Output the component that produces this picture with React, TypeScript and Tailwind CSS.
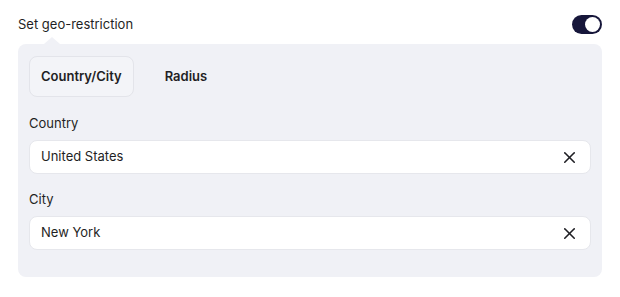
import { X } from "lucide-react";

function Field({ label, value }: { label: string; value: string }) {
  return (
    <div className="flex flex-col">
      <div className="h-[18px] text-[13px] leading-[18px] text-[#1f1f24]">{label}</div>
      <div className="mt-[8px] flex h-[34px] items-center justify-between rounded-lg border border-[#e6e7ec] bg-white pl-[11px] pr-[11px]">
        <span className="text-[13px] text-[#1f1f24]">{value}</span>
        <X className="h-[19px] w-[19px] text-[#1f1f24]" strokeWidth={2} />
      </div>
    </div>
  );
}

export default function App() {
  return (
    <div className="h-[297px] w-[620px] bg-white px-[18px] pt-[13px] font-['Inter',sans-serif]">
      {/* Header row */}
      <div className="flex h-[23px] items-center justify-between">
        <span className="text-[13px] text-[#1f1f24]">Set geo-restriction</span>
        <div className="flex h-[19px] w-[30px] items-center justify-end rounded-full bg-[#16163a] p-[2px]">
          <div className="h-[15px] w-[15px] rounded-full bg-white" />
        </div>
      </div>

      {/* Panel */}
      <div className="relative mt-[8px] rounded-lg bg-[#f0f1f6] px-[11px] pb-[27px] pt-[12px]">
        <div className="absolute -top-[7px] left-[26px] h-0 w-0 border-x-[8px] border-b-[7px] border-x-transparent border-b-[#f0f1f6]" />

        <div className="flex items-center gap-[8px]">
          <div className="flex h-[41px] items-center rounded-lg border border-[#e3e4ea] bg-[#f3f4f8] px-[11px] pt-[1px] text-[13px] font-semibold text-[#1f1f24]">
            Country/City
          </div>
          <div className="flex h-[41px] items-center px-[23px] pt-[1px] text-[13px] font-semibold text-[#1f1f24]">
            Radius
          </div>
        </div>

        <div className="mt-[17px] flex flex-col gap-[16px]">
          <Field label="Country" value="United States" />
          <Field label="City" value="New York" />
        </div>
      </div>
    </div>
  );
}
